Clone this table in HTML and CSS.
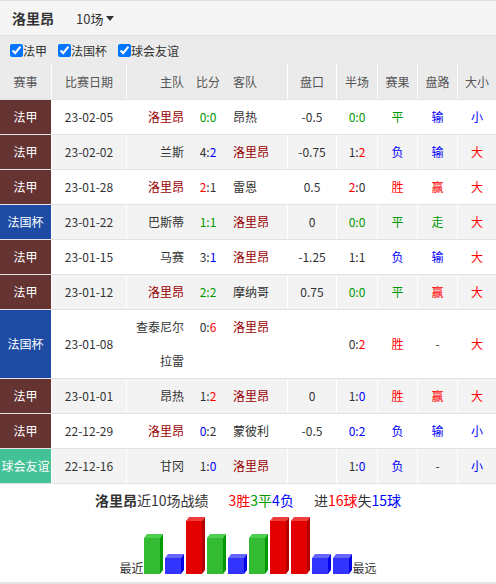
FILE: index.html
```html
<!DOCTYPE html>
<html lang="zh-CN">
<head>
<meta charset="utf-8">
<title>洛里昂 近10场</title>
<link rel="stylesheet" href="styles.css">
</head>
<body>
<div class="page">
  <header class="topbar">
    <span class="team-title">洛里昂</span>
    <span class="count">10场<span class="caret"></span></span>
  </header>
  <div class="filters">
    <label class="filter"><input type="checkbox" checked>法甲</label>
    <label class="filter"><input type="checkbox" checked>法国杯</label>
    <label class="filter"><input type="checkbox" checked>球会友谊</label>
  </div>

  <div class="table">
    <div class="row head">
      <div class="c lg-h">赛事</div>
      <div class="c date">比赛日期</div>
      <div class="c home">主队</div>
      <div class="c score">比分</div>
      <div class="c away">客队</div>
      <div class="c bd">盘口</div>
      <div class="c bd">半场</div>
      <div class="c bd">赛果</div>
      <div class="c bd">盘路</div>
      <div class="c bd">大小</div>
    </div>

    <div class="row">
      <div class="c lg l1">法甲</div>
      <div class="c date">23-02-05</div>
      <div class="c home"><span class="me">洛里昂</span></div>
      <div class="c score"><span class="g">0:0</span></div>
      <div class="c away">昂热</div>
      <div class="c bd">-0.5</div>
      <div class="c bd"><span class="g">0:0</span></div>
      <div class="c bd g">平</div>
      <div class="c bd b">输</div>
      <div class="c bd b">小</div>
    </div>

    <div class="row alt">
      <div class="c lg l1">法甲</div>
      <div class="c date">23-02-02</div>
      <div class="c home">兰斯</div>
      <div class="c score">4:<span class="b">2</span></div>
      <div class="c away"><span class="me">洛里昂</span></div>
      <div class="c bd">-0.75</div>
      <div class="c bd">1:<span class="r">2</span></div>
      <div class="c bd b">负</div>
      <div class="c bd b">输</div>
      <div class="c bd r">大</div>
    </div>

    <div class="row">
      <div class="c lg l1">法甲</div>
      <div class="c date">23-01-28</div>
      <div class="c home"><span class="me">洛里昂</span></div>
      <div class="c score"><span class="r">2</span>:1</div>
      <div class="c away">雷恩</div>
      <div class="c bd">0.5</div>
      <div class="c bd"><span class="r">2</span>:0</div>
      <div class="c bd r">胜</div>
      <div class="c bd r">赢</div>
      <div class="c bd r">大</div>
    </div>

    <div class="row alt">
      <div class="c lg l2">法国杯</div>
      <div class="c date">23-01-22</div>
      <div class="c home">巴斯蒂</div>
      <div class="c score"><span class="g">1:1</span></div>
      <div class="c away"><span class="me">洛里昂</span></div>
      <div class="c bd">0</div>
      <div class="c bd"><span class="g">0:0</span></div>
      <div class="c bd g">平</div>
      <div class="c bd g">走</div>
      <div class="c bd r">大</div>
    </div>

    <div class="row">
      <div class="c lg l1">法甲</div>
      <div class="c date">23-01-15</div>
      <div class="c home">马赛</div>
      <div class="c score">3:<span class="b">1</span></div>
      <div class="c away"><span class="me">洛里昂</span></div>
      <div class="c bd">-1.25</div>
      <div class="c bd">1:1</div>
      <div class="c bd b">负</div>
      <div class="c bd b">输</div>
      <div class="c bd r">大</div>
    </div>

    <div class="row alt">
      <div class="c lg l1">法甲</div>
      <div class="c date">23-01-12</div>
      <div class="c home"><span class="me">洛里昂</span></div>
      <div class="c score"><span class="g">2:2</span></div>
      <div class="c away">摩纳哥</div>
      <div class="c bd">0.75</div>
      <div class="c bd"><span class="g">0:0</span></div>
      <div class="c bd g">平</div>
      <div class="c bd r">赢</div>
      <div class="c bd r">大</div>
    </div>

    <div class="row">
      <div class="c lg l2">法国杯</div>
      <div class="c date">23-01-08</div>
      <div class="c home">查泰尼尔拉雷</div>
      <div class="c score">0:<span class="r">6</span></div>
      <div class="c away"><span class="me">洛里昂</span></div>
      <div class="c bd"></div>
      <div class="c bd">0:<span class="r">2</span></div>
      <div class="c bd r">胜</div>
      <div class="c bd">-</div>
      <div class="c bd r">大</div>
    </div>

    <div class="row alt">
      <div class="c lg l1">法甲</div>
      <div class="c date">23-01-01</div>
      <div class="c home">昂热</div>
      <div class="c score">1:<span class="r">2</span></div>
      <div class="c away"><span class="me">洛里昂</span></div>
      <div class="c bd">0</div>
      <div class="c bd">1:<span class="b">0</span></div>
      <div class="c bd r">胜</div>
      <div class="c bd r">赢</div>
      <div class="c bd r">大</div>
    </div>

    <div class="row">
      <div class="c lg l1">法甲</div>
      <div class="c date">22-12-29</div>
      <div class="c home"><span class="me">洛里昂</span></div>
      <div class="c score"><span class="b">0</span>:2</div>
      <div class="c away">蒙彼利</div>
      <div class="c bd">-0.5</div>
      <div class="c bd"><span class="b">0:2</span></div>
      <div class="c bd b">负</div>
      <div class="c bd b">输</div>
      <div class="c bd b">小</div>
    </div>

    <div class="row alt">
      <div class="c lg l3">球会友谊</div>
      <div class="c date">22-12-16</div>
      <div class="c home">甘冈</div>
      <div class="c score">1:<span class="b">0</span></div>
      <div class="c away"><span class="me">洛里昂</span></div>
      <div class="c bd"></div>
      <div class="c bd">1:<span class="b">0</span></div>
      <div class="c bd b">负</div>
      <div class="c bd">-</div>
      <div class="c bd b">小</div>
    </div>
  </div>

  <section class="summary">
    <div class="summary-title">
      <span><b class="st-team">洛里昂</b>近10场战绩</span>
      <span class="st-part"><span class="r">3胜</span><span class="g">3平</span><span class="b">4负</span></span>
      <span class="st-part">进<span class="r">16球</span>失<span class="b">15球</span></span>
    </div>
    <div class="chart">
      <span class="chart-label">最近</span>
      <svg class="bars" width="209" height="60" viewBox="0 0 209 60" xmlns="http://www.w3.org/2000/svg">
        <g class="bar draw">
          <rect class="front" x="0" y="24" width="16" height="36"/>
          <polygon class="top" points="0,24 3,20 19,20 16,24"/>
          <polygon class="side" points="16,24 19,20 19,56 16,60"/>
        </g>
        <g class="bar loss">
          <rect class="front" x="21" y="44" width="16" height="16"/>
          <polygon class="top" points="21,44 24,40 40,40 37,44"/>
          <polygon class="side" points="37,44 40,40 40,56 37,60"/>
        </g>
        <g class="bar win">
          <rect class="front" x="42" y="7" width="16" height="53"/>
          <polygon class="top" points="42,7 45,3 61,3 58,7"/>
          <polygon class="side" points="58,7 61,3 61,56 58,60"/>
        </g>
        <g class="bar draw">
          <rect class="front" x="63" y="24" width="16" height="36"/>
          <polygon class="top" points="63,24 66,20 82,20 79,24"/>
          <polygon class="side" points="79,24 82,20 82,56 79,60"/>
        </g>
        <g class="bar loss">
          <rect class="front" x="84" y="44" width="16" height="16"/>
          <polygon class="top" points="84,44 87,40 103,40 100,44"/>
          <polygon class="side" points="100,44 103,40 103,56 100,60"/>
        </g>
        <g class="bar draw">
          <rect class="front" x="105" y="24" width="16" height="36"/>
          <polygon class="top" points="105,24 108,20 124,20 121,24"/>
          <polygon class="side" points="121,24 124,20 124,56 121,60"/>
        </g>
        <g class="bar win">
          <rect class="front" x="126" y="7" width="16" height="53"/>
          <polygon class="top" points="126,7 129,3 145,3 142,7"/>
          <polygon class="side" points="142,7 145,3 145,56 142,60"/>
        </g>
        <g class="bar win">
          <rect class="front" x="147" y="7" width="16" height="53"/>
          <polygon class="top" points="147,7 150,3 166,3 163,7"/>
          <polygon class="side" points="163,7 166,3 166,56 163,60"/>
        </g>
        <g class="bar loss">
          <rect class="front" x="168" y="44" width="16" height="16"/>
          <polygon class="top" points="168,44 171,40 187,40 184,44"/>
          <polygon class="side" points="184,44 187,40 187,56 184,60"/>
        </g>
        <g class="bar loss">
          <rect class="front" x="189" y="44" width="16" height="16"/>
          <polygon class="top" points="189,44 192,40 208,40 205,44"/>
          <polygon class="side" points="205,44 208,40 208,56 205,60"/>
        </g>
      </svg>
      <span class="chart-label">最远</span>
    </div>
  </section>
</div>
</body>
</html>
```

FILE: styles.css
```css
html, body {
  margin: 0;
  padding: 0;
  background: #fff;
}

body {
  font-family: "Noto Sans CJK SC", "Noto Sans", sans-serif;
  color: #333;
  font-size: 12px;
}

.page {
  width: 496px;
}

/* top bar */
.topbar {
  display: flex;
  align-items: center;
  height: 34px;
  padding-left: 12px;
  background: #f5f5f5;
  border-top: 1px solid #dddddd;
  border-bottom: 1px solid #dedede;
}

.team-title {
  font-size: 14px;
  font-weight: bold;
  color: #333;
}

.count {
  display: flex;
  align-items: center;
  margin-left: 22px;
  font-size: 13px;
  color: #333;
}

.caret {
  width: 0;
  height: 0;
  margin-left: 3px;
  border-left: 4px solid transparent;
  border-right: 4px solid transparent;
  border-top: 5px solid #333;
}

/* filters */
.filters {
  display: flex;
  align-items: center;
  height: 28px;
  padding-left: 10px;
  background: #ebebeb;
  font-size: 12px;
  color: #333;
}

.filter {
  display: flex;
  align-items: center;
  margin-right: 11px;
}

.filter input {
  width: 13px;
  height: 13px;
  margin: 0;
}

/* table */
.row {
  display: grid;
  grid-template-columns: 52px 75px 65px 32px 64px 49px 41px 40px 40px 38px;
  line-height: 34px;
  border-bottom: 1px solid #e3e3e3;
  background: #fff;
}

.row.alt {
  background: #f3f3f3;
}

.row.head {
  line-height: 35px;
  background: #ebebeb;
  color: #555;
}

.c {
  display: flex;
  align-items: center;
  justify-content: center;
  text-align: center;
  white-space: normal;
}

.lg, .lg-h, .date, .bd {
  border-right: 1px solid #fff;
}

.row .c:last-child {
  border-right: none;
}

.lg {
  color: #fff;
}

.l1 { background: #663333; }
.l2 { background: #1e4ca4; }
.l3 { background: #43c197; }

.home {
  justify-content: flex-end;
  align-items: flex-start;
  text-align: right;
  padding-right: 8px;
  padding-left: 6px;
}

.score {
  align-items: flex-start;
}

.away {
  justify-content: flex-start;
  align-items: flex-start;
  text-align: left;
  padding-left: 9px;
  border-right: 1px solid #fff;
}

.me { color: #990000; }
.r { color: #ff0000; }
.g { color: #009900; }
.b { color: #0000ff; }

/* summary */
.summary {
  padding: 6px 0 8px;
  border-bottom: 2px solid #e5e5e5;
}

.summary-title {
  display: flex;
  justify-content: center;
  line-height: 20px;
  font-size: 14px;
  color: #333;
}

.st-team {
  font-weight: bold;
}

.st-part {
  margin-left: 20px;
}

.chart {
  display: flex;
  justify-content: center;
  align-items: flex-end;
  margin-top: 4px;
  height: 60px;
}

.chart-label {
  font-size: 12px;
  line-height: 12px;
  color: #333;
}

.bars {
  display: block;
}

.win .front { fill: #e30000; }
.win .top { fill: #f03c3c; }
.win .side { fill: #b30000; }

.draw .front { fill: #33bb33; }
.draw .top { fill: #4fcf4f; }
.draw .side { fill: #009900; }

.loss .front { fill: #3333ff; }
.loss .top { fill: #6666ff; }
.loss .side { fill: #0000e6; }
```
